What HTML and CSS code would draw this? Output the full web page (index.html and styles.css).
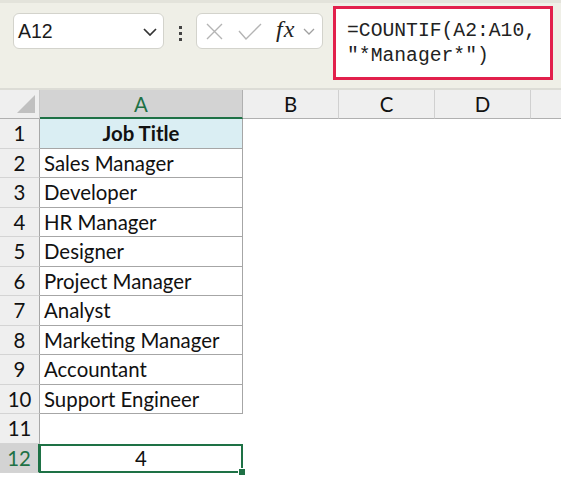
FILE: index.html
```html
<!DOCTYPE html>
<html lang="en">
<head>
    <meta charset="UTF-8">
    <title>COUNTIF Manager</title>
    <link rel="stylesheet" href="styles.css">
</head>
<body>
    <div class="toolbar">
        <div class="name-box">
            <span>A12</span>
            <svg class="chev" width="14" height="8" viewBox="0 0 14 8"><path d="M1 1 L7 7 L13 1" fill="none" stroke="#333" stroke-width="1.7"/></svg>
        </div>
        <div class="dots"><i></i><i></i><i></i></div>
        <div class="fx-box">
            <svg class="ic-x" width="17" height="17" viewBox="0 0 17 17"><path d="M1 1 L16 16 M16 1 L1 16" stroke="#b4b4b4" stroke-width="1.4"/></svg>
            <svg class="ic-ok" width="24" height="17" viewBox="0 0 24 17"><path d="M1 8 L8 16 L23 1" fill="none" stroke="#b4b4b4" stroke-width="1.4"/></svg>
            <span class="fx">fx</span>
            <svg class="ic-dd" width="12" height="7" viewBox="0 0 12 7"><path d="M1 1 L6 6 L11 1" fill="none" stroke="#a0a0a0" stroke-width="1.3"/></svg>
        </div>
        <div class="formula">=COUNTIF(A2:A10,<br>"*Manager*")</div>
    </div>

    <div class="sheet">
        <div class="corner"><div class="tri"></div></div>
        <div class="col-head selected">A</div>
        <div class="col-head">B</div>
        <div class="col-head">C</div>
        <div class="col-head">D</div>
        <div class="col-head last"></div>

        <div class="row-head">1</div>
        <div class="cell tbl title">Job Title</div>
        <div class="cell span4"></div>

        <div class="row-head">2</div><div class="cell tbl">Sales Manager</div><div class="cell span4"></div>
        <div class="row-head">3</div><div class="cell tbl">Developer</div><div class="cell span4"></div>
        <div class="row-head">4</div><div class="cell tbl">HR Manager</div><div class="cell span4"></div>
        <div class="row-head">5</div><div class="cell tbl">Designer</div><div class="cell span4"></div>
        <div class="row-head">6</div><div class="cell tbl">Project Manager</div><div class="cell span4"></div>
        <div class="row-head">7</div><div class="cell tbl">Analyst</div><div class="cell span4"></div>
        <div class="row-head">8</div><div class="cell tbl">Marketing Manager</div><div class="cell span4"></div>
        <div class="row-head">9</div><div class="cell tbl">Accountant</div><div class="cell span4"></div>
        <div class="row-head">10</div><div class="cell tbl">Support Engineer</div><div class="cell span4"></div>
        <div class="row-head">11</div><div class="cell"></div><div class="cell span4"></div>
        <div class="row-head active">12</div>
        <div class="cell current">4<span class="handle"></span></div>
        <div class="cell span4"></div>
    </div>
</body>
</html>
```

FILE: styles.css
```css
body {
    margin: 0;
    width: 561px;
    height: 478px;
    overflow: hidden;
    background-color: #fff;
    font-family: 'Lato', sans-serif;
    color: #111;
}

.toolbar {
    height: 85px;
    background-color: #efefe7;
    border-top: 3px solid #e3e3db;
    border-bottom: 2px solid #dcdcd6;
    display: flex;
    align-items: flex-start;
    padding-left: 13px;
}

.name-box {
    margin-top: 10px;
    width: 151px;
    height: 36px;
    background-color: #fff;
    border: 1px solid #d3d3cc;
    border-radius: 6px;
    display: flex;
    align-items: center;
    justify-content: space-between;
    padding: 0 6px 0 4px;
    box-sizing: border-box;
    font-family: 'Liberation Sans', Arial, sans-serif;
    font-size: 19.5px;
    color: #1a1a1a;
    flex-shrink: 0;
}

.name-box .chev {
    margin-top: 2px;
}

.dots {
    width: 32px;
    margin-top: 23px;
    display: flex;
    flex-direction: column;
    align-items: center;
    gap: 3px;
    flex-shrink: 0;
}

.dots i {
    width: 3px;
    height: 3px;
    background-color: #444;
}

.fx-box {
    margin-top: 10px;
    width: 127px;
    height: 36px;
    background-color: #fff;
    border: 1px solid #d3d3cc;
    border-radius: 6px;
    display: flex;
    align-items: center;
    padding-left: 9px;
    box-sizing: border-box;
    margin-right: 10px;
    flex-shrink: 0;
}

.ic-ok {
    margin-left: 15px;
}

.fx-box .fx {
    margin-left: 14px;
    font-family: 'Liberation Serif', serif;
    font-style: italic;
    font-size: 24px;
    color: #222;
    letter-spacing: 1px;
    margin-top: -3px;
}

.ic-dd {
    margin-left: 8px;
}

.formula {
    margin-top: 3px;
    width: 220px;
    height: 74px;
    border: 3px solid #e2204c;
    background-color: #fff;
    font-family: 'Liberation Mono', monospace;
    font-size: 19.7px;
    line-height: 25px;
    padding: 10px 0 0 11px;
    box-sizing: border-box;
    color: #222;
    flex-shrink: 0;
}

.sheet {
    display: grid;
    grid-template-columns: 40px 203px 96px 96px 96px 1fr;
    grid-template-rows: 29px;
    grid-auto-rows: 29.5px;
}

.corner,
.col-head {
    background-color: #efefef;
    border-bottom: 1px solid #b0b0b0;
    box-sizing: border-box;
}

.corner {
    border-right: 1px solid #c8c8c8;
    display: flex;
    align-items: flex-end;
    justify-content: flex-end;
    padding: 0 4px 5px 0;
}

.tri {
    width: 0;
    height: 0;
    border-left: 18px solid transparent;
    border-bottom: 18px solid #c0c0c0;
}

.col-head {
    border-right: 1px solid #d0d0d0;
    display: flex;
    align-items: center;
    justify-content: center;
    font-size: 20.4px;
    color: #111;
}

.col-head.selected {
    background-color: #d3d3d3;
    color: #1e7145;
    border-bottom: 2px solid #1e7145;
    border-right-color: #b0b0b0;
}

.col-head.last {
    border-right: none;
}

.row-head {
    background-color: #efefef;
    border-right: 1px solid #a8a8a8;
    border-bottom: 1px solid #d4d4d4;
    box-sizing: border-box;
    display: flex;
    align-items: center;
    justify-content: center;
    font-size: 20.4px;
    color: #111;
}

.row-head.active {
    background-color: #d3d3d3;
    color: #1e7145;
    border-right: 2px solid #1e7145;
}

.cell {
    box-sizing: border-box;
    display: flex;
    align-items: center;
    font-size: 20.4px;
    padding-left: 4px;
    white-space: nowrap;
}

.span4 {
    grid-column: span 4;
}

.tbl {
    border-right: 1px solid #a6a6a6;
    border-bottom: 1px solid #a6a6a6;
}

.title {
    background-color: #daeef3;
    font-weight: bold;
    justify-content: center;
    padding-left: 0;
}

.current {
    position: relative;
    border: 2px solid #1e7145;
    justify-content: center;
    padding-left: 0;
    margin-left: -1px;
}

.handle {
    position: absolute;
    right: -5px;
    bottom: -5px;
    width: 6px;
    height: 6px;
    background-color: #1e7145;
    border: 1px solid #fff;
}
```
